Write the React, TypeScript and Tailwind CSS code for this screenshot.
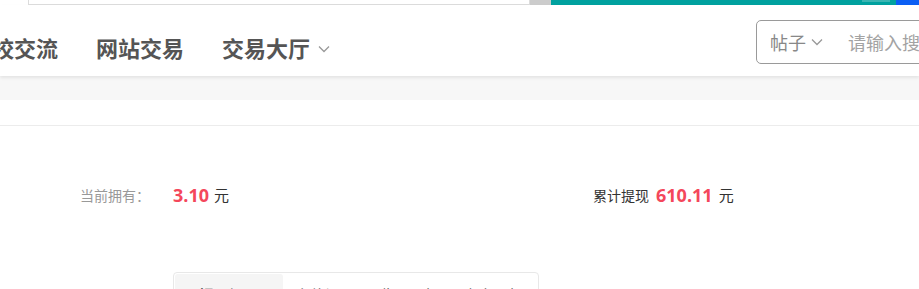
import React from 'react';

const CJK = { fontFamily: '"Noto Sans CJK SC", "Noto Sans", sans-serif' };
const NUM = { fontFamily: '"Open Sans", "Noto Sans CJK SC", sans-serif' };

const Chevron: React.FC<{ className?: string }> = ({ className }) => (
    <svg viewBox="0 0 12 8" className={className} fill="none" stroke="currentColor" strokeWidth="1.3">
        <path d="M1 1.5 L6 6.5 L11 1.5" />
    </svg>
);

export default function App() {
    const tabs = ['提现记录', '充值记录', '收入明细', '支出明细'];

    return (
        <div className="w-[919px] h-[289px] overflow-hidden bg-white relative" style={CJK}>
            {/* top strip */}
            <div className="flex h-[5px]">
                <div className="w-[28px]" />
                <div className="w-[502px] border border-t-0 border-[#dcdcdc] bg-white" />
                <div className="w-[21px] bg-[#cccccc]" />
                <div className="flex-1 bg-[#00a19f] flex">
                    <div className="ml-auto mr-[6px] w-[28px] h-[2px] bg-[#3bb5b3]" />
                </div>
                <div className="w-[23px] bg-[#0b5ff4]" />
            </div>

            {/* nav */}
            <div className="relative z-10 h-[71px] flex items-start bg-white shadow-[0_2px_3px_rgba(0,0,0,0.08)]">
                <div className="flex shrink-0 items-center gap-[38px] ml-[-30px] mt-[28px] text-[22px] font-bold text-[#555] leading-[28px] whitespace-nowrap">
                    <span>院校交流</span>
                    <span>网站交易</span>
                    <span className="flex items-center gap-[8px]">
                        交易大厅
                        <Chevron className="w-[12px] h-[8px] text-[#999] mt-[3px]" />
                    </span>
                </div>
                <div className="absolute left-[756px] top-[15px] w-[260px] h-[44px] border border-[#9a9a9a] rounded-[5px] flex items-center pl-[13px] whitespace-nowrap">
                    <span className="shrink-0 text-[18px] text-[#888]">帖子</span>
                    <Chevron className="shrink-0 w-[12px] h-[8px] text-[#999] ml-[5px]" />
                    <span className="shrink-0 ml-[25px] text-[18px] text-[#a3a3a3]">请输入搜索内容</span>
                </div>
            </div>

            {/* gray band */}
            <div className="h-[24px] bg-[#f7f7f7]" />
            <div className="h-[26px] border-b border-[#ececec]" />

            {/* balances */}
            <div className="flex items-center pl-[80px] mt-[57px] h-[24px] whitespace-nowrap">
                <span className="w-[93px] text-[14px] text-[#999]">当前拥有：</span>
                <span className="text-[18px] font-bold text-[#f4475b]" style={NUM}>3.10</span>
                <span className="ml-[5px] text-[15px] text-[#333]">元</span>
                <span className="ml-[364px] text-[14px] text-[#333]">累计提现</span>
                <span className="ml-[7px] text-[18px] font-bold text-[#f4475b]" style={NUM}>610.11</span>
                <span className="ml-[6px] text-[15px] text-[#333]">元</span>
            </div>

            {/* tabs */}
            <div className="ml-[173px] mt-[65px] w-[366px] h-[46px] border border-[#e8e8e8] rounded-[4px] p-[1px] flex">
                {tabs.map((t, i) => (
                    <div
                        key={t}
                        className={`h-full flex items-center justify-center text-[15px] ${i === 0 ? 'w-[108px] bg-[#f5f5f5] font-bold text-[#333] rounded-t-[3px]' : 'w-[84px] text-[#555]'}`}
                    >
                        {t}
                    </div>
                ))}
            </div>
        </div>
    );
}
